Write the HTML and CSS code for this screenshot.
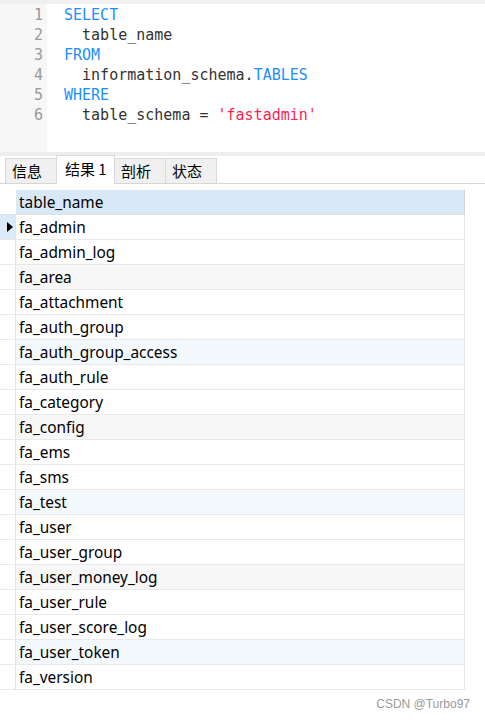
FILE: index.html
```html
<!DOCTYPE html>
<html lang="zh">
<head>
<meta charset="utf-8">
<title>Query</title>
<link rel="stylesheet" href="styles.css">
</head>
<body>
<div class="page">
  <div class="editor">
    <div class="gutter">
      <div class="ln">1</div><div class="ln">2</div><div class="ln">3</div>
      <div class="ln">4</div><div class="ln">5</div><div class="ln">6</div>
    </div>
    <div class="code">
      <div class="line"><span class="kw">SELECT</span></div>
      <div class="line">  table_name</div>
      <div class="line"><span class="kw">FROM</span></div>
      <div class="line">  information_schema.<span class="kw">TABLES</span></div>
      <div class="line"><span class="kw">WHERE</span></div>
      <div class="line">  table_schema = <span class="str">'fastadmin'</span></div>
    </div>
  </div>
  <div class="sep"></div>
  <div class="tabs">
    <div class="tab">信息</div>
    <div class="tab active">结果 1</div>
    <div class="tab">剖析</div>
    <div class="tab">状态</div>
  </div>
  <div class="grid">
    <div class="row head"><div class="ind"></div><div class="cell">table_name</div></div>
    <div class="row current"><div class="ind"><span class="tri"></span></div><div class="cell">fa_admin</div></div>
    <div class="row"><div class="ind"></div><div class="cell">fa_admin_log</div></div>
    <div class="row gray"><div class="ind"></div><div class="cell">fa_area</div></div>
    <div class="row"><div class="ind"></div><div class="cell">fa_attachment</div></div>
    <div class="row"><div class="ind"></div><div class="cell">fa_auth_group</div></div>
    <div class="row blue"><div class="ind"></div><div class="cell">fa_auth_group_access</div></div>
    <div class="row"><div class="ind"></div><div class="cell">fa_auth_rule</div></div>
    <div class="row"><div class="ind"></div><div class="cell">fa_category</div></div>
    <div class="row gray"><div class="ind"></div><div class="cell">fa_config</div></div>
    <div class="row"><div class="ind"></div><div class="cell">fa_ems</div></div>
    <div class="row"><div class="ind"></div><div class="cell">fa_sms</div></div>
    <div class="row blue"><div class="ind"></div><div class="cell">fa_test</div></div>
    <div class="row"><div class="ind"></div><div class="cell">fa_user</div></div>
    <div class="row"><div class="ind"></div><div class="cell">fa_user_group</div></div>
    <div class="row gray"><div class="ind"></div><div class="cell">fa_user_money_log</div></div>
    <div class="row"><div class="ind"></div><div class="cell">fa_user_rule</div></div>
    <div class="row"><div class="ind"></div><div class="cell">fa_user_score_log</div></div>
    <div class="row blue"><div class="ind"></div><div class="cell">fa_user_token</div></div>
    <div class="row"><div class="ind"></div><div class="cell">fa_version</div></div>
  </div>
  <div class="watermark">CSDN @Turbo97</div>
</div>
</body>
</html>
```
FILE: styles.css
```css
html, body {
  margin: 0;
  padding: 0;
  background: #ffffff;
}
.page {
  position: relative;
  width: 485px;
  height: 720px;
  overflow: hidden;
  background: #ffffff;
}
.editor {
  display: flex;
  height: 152px;
  box-sizing: border-box;
  border-top: 4px solid #f0f0f0;
  background: #ffffff;
}
.gutter {
  width: 47px;
  box-sizing: border-box;
  background: #f7f7f7;
  padding: 1px 4px 0 0;
  text-align: right;
  font-family: "DejaVu Sans Mono", "Liberation Mono", monospace;
  font-size: 15px;
  color: #999999;
}
.ln, .line {
  height: 20px;
  line-height: 20px;
}
.code {
  flex: 1;
  padding: 1px 0 0 17px;
  font-family: "DejaVu Sans Mono", "Liberation Mono", monospace;
  font-size: 15px;
  color: #333333;
}
.line {
  white-space: pre;
}
.kw { color: #1f8fff; }
.str { color: #ff1f4f; }
.sep {
  height: 4px;
  background: #eeeeee;
}
.tabs {
  display: flex;
  align-items: flex-end;
  height: 28px;
  box-sizing: border-box;
  padding-left: 5px;
  border-bottom: 1px solid #d6d6d6;
  font-family: "Noto Sans CJK SC", "Noto Sans", sans-serif;
  font-size: 15px;
  color: #000000;
}
.tab {
  width: 52px;
  height: 25px;
  box-sizing: border-box;
  padding-left: 6px;
  line-height: 24px;
  background: #f0f0f0;
  border: 1px solid #d9d9d9;
  border-bottom: 0;
  margin-right: -1px;
}
.tab.active {
  width: 59px;
  height: 29px;
  padding-left: 8px;
  line-height: 26px;
  background: #ffffff;
  margin-bottom: -1px;
}
.grid {
  margin-top: 6px;
  width: 465px;
  font-family: "Noto Sans", "Noto Sans CJK SC", sans-serif;
  font-size: 15.4px;
  color: #000000;
}
.row {
  display: flex;
  height: 25px;
  box-sizing: border-box;
  border-bottom: 1px solid #e9e9e9;
}
.ind {
  width: 16px;
  flex: none;
  box-sizing: border-box;
  border-right: 1px solid #e3e3e3;
  display: flex;
  align-items: center;
  justify-content: flex-start;
  padding-left: 7px;
}
.cell {
  flex: 1;
  padding: 2px 0 0 3px;
  line-height: 22px;
  border-right: 1px solid #e6e6e6;
  white-space: nowrap;
}
.row.head {
  border-bottom-color: #e0e0e0;
}
.row.head .ind {
  border-right: 0;
}
.row.head .cell {
  background: #d9e8f7;
  border-right-color: #d4d4d4;
}
.row.current .ind {
  background: #dce9f7;
}
.tri {
  width: 0;
  height: 0;
  border-top: 5px solid transparent;
  border-bottom: 5px solid transparent;
  border-left: 6px solid #000000;
}
.row.gray .cell { background: #f7f7f7; }
.row.blue .cell { background: #f3f8fd; }
.watermark {
  position: absolute;
  right: 15px;
  top: 697px;
  font-family: "Liberation Sans", Arial, sans-serif;
  font-size: 12px;
  color: #9a9a9a;
}
```
